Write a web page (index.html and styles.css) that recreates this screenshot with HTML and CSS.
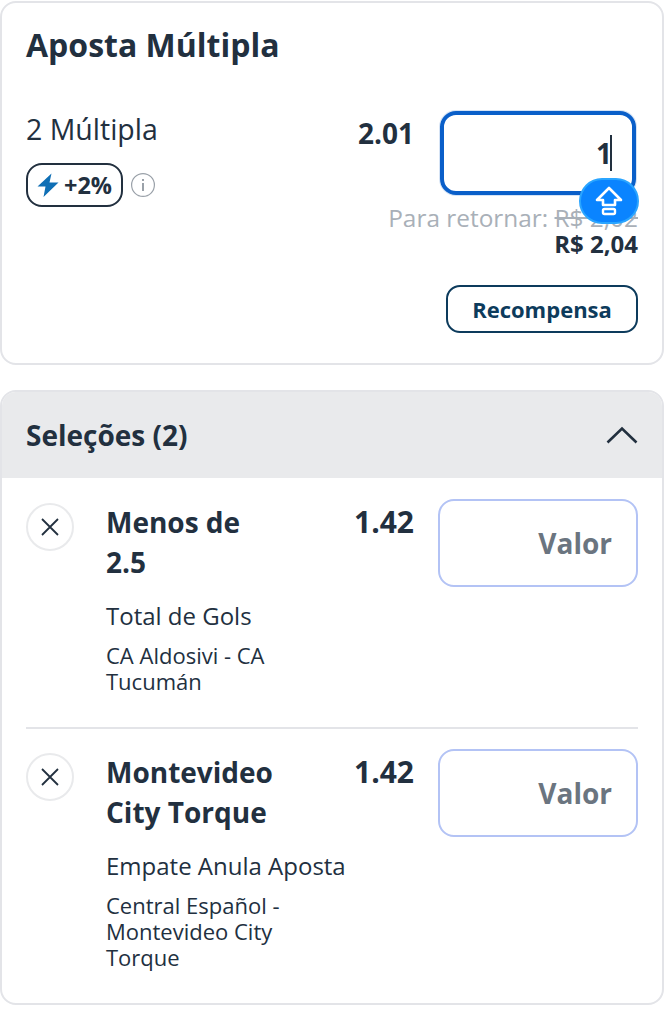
FILE: index.html
```html
<!DOCTYPE html>
<html lang="pt">
<head>
<meta charset="utf-8">
<title>Aposta Múltipla</title>
<link rel="stylesheet" href="styles.css">
</head>
<body>
<main class="page">
  <section class="card multi">
    <h1 class="title">Aposta Múltipla</h1>
    <div class="multi-row">
      <div class="multi-left">
        <div class="multi-name">2 Múltipla</div>
        <div class="boost-line">
          <span class="boost">
            <svg class="bolt" viewBox="0 0 22 24" width="22" height="26"><path d="M14.5 0.5 L0.5 13.5 L8.5 13.5 L6.5 24 L21.5 9.5 L12.5 9.5 Z" fill="#0f6fb5"/></svg>
            <span>+2%</span>
          </span>
          <svg class="info" viewBox="0 0 24 24" width="24" height="24"><circle cx="12" cy="12" r="11.4" fill="none" stroke="#9aa1a9" stroke-width="1.2"/><rect x="11" y="10" width="2" height="8" fill="#9aa1a9"/><rect x="11" y="6" width="2" height="2" fill="#9aa1a9"/></svg>
        </div>
      </div>
      <div class="multi-odds">2.01</div>
      <div class="multi-right">
        <div class="stake-wrap">
          <div class="stake"><span>1</span><i class="caret"></i></div>
          <span class="shift">
            <svg viewBox="0 0 28 30" width="28" height="30"><path d="M14 2 L26 14 L20 14 L20 19 L8 19 L8 14 L2 14 Z" fill="none" stroke="#fff" stroke-width="2.6" stroke-linejoin="round"/><rect x="8" y="23" width="12" height="5" rx="1.5" fill="none" stroke="#fff" stroke-width="2.4"/></svg>
          </span>
        </div>
        <div class="returns">Para retornar: <s>R$ 2,02</s></div>
        <div class="boosted">R$ 2,04</div>
        <button class="reward" type="button">Recompensa</button>
      </div>
    </div>
  </section>

  <section class="card selections">
    <header class="sel-head">
      <h2 class="sel-title">Seleções (2)</h2>
      <svg viewBox="0 0 32 18" width="32" height="18"><path d="M1.5 16.5 L16 2.5 L30.5 16.5" fill="none" stroke="#22303f" stroke-width="2.6"/></svg>
    </header>
    <div class="sel-list">
      <article class="sel">
        <span class="close"><svg viewBox="0 0 20 20" width="20" height="20"><path d="M2 2 L18 18 M18 2 L2 18" stroke="#22303f" stroke-width="1.8" fill="none"/></svg></span>
        <div class="sel-info">
          <div class="sel-top">
            <div class="sel-name">Menos de 2.5</div>
            <div class="sel-odds">1.42</div>
          </div>
          <div class="sel-market">Total de Gols</div>
          <div class="sel-event">CA Aldosivi - CA Tucumán</div>
        </div>
        <div class="valor">Valor</div>
      </article>
      <article class="sel">
        <span class="close"><svg viewBox="0 0 20 20" width="20" height="20"><path d="M2 2 L18 18 M18 2 L2 18" stroke="#22303f" stroke-width="1.8" fill="none"/></svg></span>
        <div class="sel-info">
          <div class="sel-top">
            <div class="sel-name">Montevideo City Torque</div>
            <div class="sel-odds">1.42</div>
          </div>
          <div class="sel-market">Empate Anula Aposta</div>
          <div class="sel-event">Central Español - Montevideo City Torque</div>
        </div>
        <div class="valor">Valor</div>
      </article>
    </div>
  </section>
</main>
</body>
</html>
```
FILE: styles.css
```css
* { box-sizing: border-box; }
html, body { margin: 0; padding: 0; background: #fff; }
body { font-family: "Open Sans", "Noto Sans", sans-serif; color: #22303f; }
.page { width: 664px; padding-top: 1px; display: flex; flex-direction: column; gap: 25px; }
.card { border: 2px solid #e3e4e8; border-radius: 16px; background: #fff; overflow: hidden; }

.multi { height: 364px; padding: 21px 24px 0; }
.title { margin: 0; font-size: 32px; line-height: 42px; font-weight: 700; }
.multi-row { display: flex; margin-top: 45px; }
.multi-left { width: 332px; }
.multi-name { font-size: 28.5px; line-height: 36px; }
.boost-line { display: flex; align-items: center; gap: 8px; margin-top: 16px; }
.boost { display: flex; align-items: center; gap: 5px; height: 44px; width: 97px; padding-left: 9px; border: 2px solid #22303f; border-radius: 16px; font-size: 23.5px; font-weight: 700; }
.bolt { flex: none; }
.info { flex: none; }
.multi-odds { font-size: 28px; line-height: 36px; font-weight: 700; margin-top: 4px; width: 82px; }
.multi-right { width: 198px; display: flex; flex-direction: column; align-items: flex-end; }
.stake-wrap { position: relative; width: 198px; }
.stake { height: 84px; width: 196px; border: 4px solid #0a5fc9; border-radius: 16px; display: flex; align-items: center; justify-content: flex-end; padding-right: 20px; font-size: 28px; font-weight: 700; box-shadow: 0 0 0 1px #d5e3f5; }
.caret { display: block; width: 2px; height: 36px; background: #22303f; margin-left: -2px; }
.shift { position: absolute; left: 139px; top: 67px; width: 60px; height: 46px; border-radius: 23px; background: #0a84ff; border: 2px solid #2aa5ff; display: flex; align-items: center; justify-content: center; }
.returns { margin-top: 10px; font-size: 24.4px; line-height: 26px; color: #a9b0b8; white-space: nowrap; }
.boosted { font-size: 24px; line-height: 26px; font-weight: 700; }
.reward { margin-top: 28px; width: 192px; height: 48px; border: 2px solid #0d3b5c; border-radius: 14px; background: #fff; color: #0d3b5c; font: 700 22px "Open Sans", sans-serif; padding: 0; }

.selections { height: 615px; }
.sel-head { height: 86px; background: #e9eaec; display: flex; align-items: center; justify-content: space-between; padding: 0 24px; }
.sel-title { margin: 0; font-size: 28px; font-weight: 700; }
.sel-list { padding: 0 24px; }
.sel { display: flex; align-items: flex-start; padding-top: 21px; }
.sel + .sel { border-top: 2px solid #e3e4e8; margin-top: 33px; padding-top: 20px; }
.close { flex: none; width: 48px; height: 48px; margin-top: 4px; border: 2px solid #e9eaec; border-radius: 50%; display: flex; align-items: center; justify-content: center; }
.sel-info { flex: none; width: 308px; margin-left: 32px; }
.sel-top { display: flex; justify-content: space-between; align-items: flex-start; }
.sel-name { width: 175px; font-size: 28px; line-height: 40px; font-weight: 700; margin-top: 3px; }
.sel-odds { font-size: 30px; line-height: 36px; font-weight: 700; margin-top: 5px; }
.sel-market { font-size: 24px; line-height: 30px; margin-top: 19px; }
.sel-event { font-size: 22px; line-height: 26px; margin-top: 11px; width: 190px; }
.valor { flex: none; width: 200px; height: 88px; margin-left: 24px; border: 2px solid #b3c3f5; border-radius: 16px; display: flex; align-items: center; justify-content: flex-end; padding-right: 24px; font-size: 28px; font-weight: 700; color: #6b7580; }
```
